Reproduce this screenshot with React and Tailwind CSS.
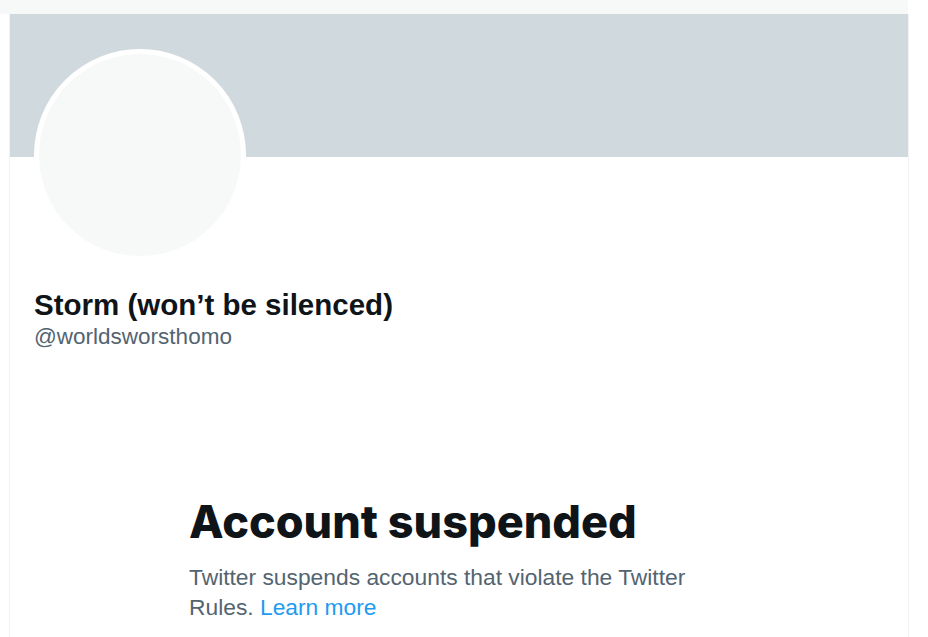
export default function App() {
  return (
    <div className="w-[928px] h-[637px] bg-white overflow-hidden font-['Liberation_Sans',Arial,sans-serif]">
      {/* top strip */}
      <div className="w-[908px] h-[14px] bg-[#f7f9f9]" />

      <div className="ml-[9px] w-[900px] h-[623px] border-x border-[#eff3f4]">
        {/* banner */}
        <div className="h-[143px] bg-[#cfd9de]" />

        {/* avatar + names */}
        <div className="px-[24px]">
          <div className="-mt-[108px] w-[212px] h-[212px] rounded-full border-[5px] border-white bg-[#f7f9f9]" />
          <div className="mt-[27px]">
            <h2 className="text-[29.5px] leading-[34px] font-bold text-[#0f1419]">Storm (won’t be silenced)</h2>
            <p className="text-[22.5px] leading-[30px] text-[#536471]">@worldsworsthomo</p>
          </div>
        </div>

        {/* suspended notice */}
        <div className="ml-[179px] mt-[142px] w-[524px]">
          <h1 className="font-['Inter',sans-serif] text-[45px] leading-[56px] font-extrabold text-[#0f1419]">Account suspended</h1>
          <p className="mt-[12px] text-[22.8px] leading-[30px] text-[#536471]">
            Twitter suspends accounts that violate the Twitter Rules. <span className="text-[#1d9bf0]">Learn more</span>
          </p>
        </div>
      </div>
    </div>
  )
}
